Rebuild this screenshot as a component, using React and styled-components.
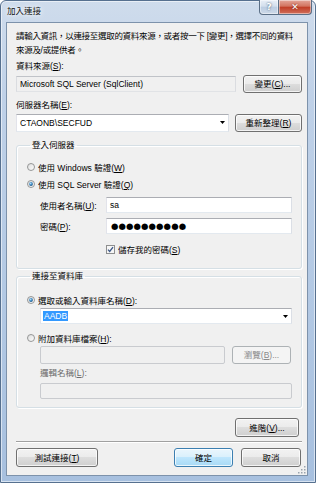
import React from "react";
import styled, { createGlobalStyle } from "styled-components";

const Global = createGlobalStyle`
  html, body { margin: 0; padding: 0; background: #fff; }
  body {
    font-family: "Liberation Sans", "Noto Sans CJK TC", sans-serif;
    font-size: 8.5px;
    color: #000;
  }
`;

const Frame = styled.div`
  width: 316px;
  height: 483px;
  box-sizing: border-box;
  display: flex;
  flex-direction: column;
  border: 1px solid #56708f;
  border-radius: 6px 6px 0 0;
  padding: 0 7px 6px 5px;
  background: linear-gradient(#cfdcec 0%, #bfd1e8 20%, #b3c9e4 60%, #a7c0df 100%);
  box-shadow: inset 0 0 0 1px rgba(255, 255, 255, 0.55);
`;

const TitleBar = styled.div`
  height: 21px;
  display: flex;
  align-items: flex-start;
  margin-right: -4px;
`;

const Title = styled.div`
  line-height: 20px;
  padding-left: 1px;
  text-shadow: 0 0 6px #fff, 0 0 3px #fff;
  color: #111;
`;

const Caption = styled.div`
  margin-left: auto;
  display: flex;
  margin-top: -1px;
`;

const CapButton = styled.div`
  width: ${(p) => p.w}px;
  height: 15px;
  box-sizing: border-box;
  border: 1px solid #5b6f86;
  border-top: none;
  border-radius: ${(p) => (p.close ? "0 0 4px 0" : "0 0 0 4px")};
  border-left: ${(p) => (p.close ? "none" : "1px solid #5b6f86")};
  display: flex;
  align-items: center;
  justify-content: center;
  color: #fff;
  font-family: "DejaVu Sans", sans-serif;
  font-weight: bold;
  font-size: 9px;
  background: ${(p) =>
    p.close
      ? "linear-gradient(#e3a69a 0%, #d2735f 45%, #c03c25 50%, #d0705c 100%)"
      : "linear-gradient(#e9eff7 0%, #d3dfed 45%, #bccde2 50%, #cdd9e8 100%)"};
  box-shadow: inset 0 0 0 1px rgba(255, 255, 255, 0.45);
  text-shadow: 0 0 2px ${(p) => (p.close ? "#6b1a0e" : "#34495e")};
`;

const Client = styled.div`
  position: relative;
  flex: 1;
  box-sizing: border-box;
  background: #f0f0f0;
  border: 1px solid #7d92ab;
  padding: 6px 5px 0 9px;
  display: flex;
  flex-direction: column;
`;

const Intro = styled.div`
  line-height: 14px;
  white-space: nowrap;
  letter-spacing: -0.3px;
`;

const Label = styled.div`
  line-height: 14px;
  margin-top: ${(p) => p.mt || 0}px;
  margin-left: ${(p) => p.ml || 0}px;
  color: ${(p) => (p.disabled ? "#6d6d6d" : "#000")};
  white-space: nowrap;
`;

const Row = styled.div`
  display: flex;
  align-items: center;
  height: ${(p) => p.h || 18}px;
  margin-top: ${(p) => p.mt || 0}px;
  margin-left: ${(p) => p.ml || 0}px;
  gap: ${(p) => p.gap || 0}px;
`;

const TextBox = styled.div`
  box-sizing: border-box;
  height: ${(p) => p.h || 16}px;
  width: ${(p) => (p.w ? `${p.w}px` : "auto")};
  flex: ${(p) => (p.w ? "none" : 1)};
  border: 1px solid;
  border-color: ${(p) =>
    p.disabled ? "#c9cbcf" : p.readonly ? "#c0c3c8 #dadce0 #e1e3e6 #dadce0" : "#abadb3 #dbdfe6 #e3e9ef #e2e3ea"};
  border-radius: ${(p) => (p.disabled ? 2 : 0)}px;
  background: ${(p) => (p.disabled || p.readonly ? "#f0f0f0" : "#fff")};
  padding: 0 3px;
  display: flex;
  align-items: center;
  white-space: nowrap;
  overflow: hidden;
`;

const Value = styled.span`
  flex: 1;
  line-height: 12px;
`;

const Selected = styled.span`
  background: #3399ff;
  color: #fff;
  line-height: 12px;
  padding: 0 1px;
  margin-left: -1px;
`;

const Dots = styled.span`
  font-family: "DejaVu Sans", sans-serif;
  font-size: 8.5px;
  letter-spacing: 0.1px;
  line-height: 12px;
  padding-left: 1px;
`;

const Button = styled.button`
  box-sizing: border-box;
  height: ${(p) => p.h || 19}px;
  width: ${(p) => p.w}px;
  flex: none;
  margin: 0 ${(p) => p.mr || 0}px 0 ${(p) => p.ml || 0}px;
  padding: 0;
  font: inherit;
  line-height: 12px;
  color: ${(p) => (p.disabled ? "#8a8a8a" : "#000")};
  border: 1px solid ${(p) => (p.primary ? "#3c7fb1" : p.disabled ? "#adb2b5" : "#707070")};
  border-radius: 3px;
  background: ${(p) =>
    p.primary
      ? "linear-gradient(#eaf6fd 0%, #d9f0fc 50%, #bee6fd 50%, #a7d9f5 100%)"
      : p.disabled
      ? "#f4f4f4"
      : "linear-gradient(#f2f2f2 0%, #ebebeb 50%, #dddddd 50%, #cfcfcf 100%)"};
  box-shadow: inset 0 0 0 1px ${(p) => (p.disabled ? "#f4f4f4" : "rgba(255,255,255,0.75)")};
`;

const Group = styled.fieldset`
  margin: ${(p) => p.mt || 0}px 0 0;
  padding: 0 9px ${(p) => p.pb}px 10px;
  border: 1px solid #d5dfe5;
  border-radius: 3px;
  box-shadow: inset 1px 1px 0 #fff, 1px 1px 0 #fff;
  min-width: 0;
  display: flex;
  flex-direction: column;
`;

const Legend = styled.legend`
  padding: 0 2px;
  margin-left: 3px;
  line-height: 14px;
`;

const OptionRow = styled.div`
  display: flex;
  align-items: center;
  gap: 3px;
  height: 14px;
  margin-top: ${(p) => p.mt || 0}px;
  margin-left: ${(p) => p.ml || 0}px;
  white-space: nowrap;
`;

const FieldLabel = styled.div`
  width: 79px;
  flex: none;
  padding-left: 13px;
  box-sizing: border-box;
  white-space: nowrap;
`;

const Separator = styled.div`
  margin-top: 4px;
  height: 1px;
  background: #a0a0a0;
  border-bottom: 1px solid #fff;
`;

const Footer = styled.div`
  display: flex;
  align-items: center;
  margin-top: 5px;
`;

const Spacer = styled.div`
  flex: 1;
`;

const Grip = styled.svg`
  position: absolute;
  right: 1px;
  bottom: 1px;
`;

const RadioIcon = ({ checked }) => (
  <svg width="8" height="8" viewBox="0 0 8 8">
    <defs>
      <linearGradient id="rg" x1="0" y1="0" x2="1" y2="1">
        <stop offset="0" stopColor="#dcdcdc" />
        <stop offset="1" stopColor="#ffffff" />
      </linearGradient>
      <radialGradient id="rd" cx="0.4" cy="0.35" r="0.7">
        <stop offset="0" stopColor="#b9e1f7" />
        <stop offset="0.5" stopColor="#3f8cc6" />
        <stop offset="1" stopColor="#1b4e7a" />
      </radialGradient>
    </defs>
    <circle cx="4" cy="4" r="3.5" fill="url(#rg)" stroke="#8b8c8c" strokeWidth="0.9" />
    {checked && <circle cx="4" cy="4" r="1.9" fill="url(#rd)" />}
  </svg>
);

const CheckIcon = () => (
  <svg width="9" height="9" viewBox="0 0 9 9">
    <rect x="0.5" y="0.5" width="8" height="8" fill="#f6f6f6" stroke="#8e8f8f" />
    <path d="M2 4.6 L3.7 6.4 L7 2.2" fill="none" stroke="#3a5686" strokeWidth="1.3" />
  </svg>
);

const Arrow = () => (
  <svg width="5" height="3" viewBox="0 0 5 3">
    <path d="M0 0 H5 L2.5 3 Z" fill="#000" />
  </svg>
);

const App = () => {
  return (
    <>
      <Global />
      <Frame>
        <TitleBar>
          <Title>加入連接</Title>
          <Caption>
            <CapButton w={20}>?</CapButton>
            <CapButton w={33} close>
              ✕
            </CapButton>
          </Caption>
        </TitleBar>
        <Client>
          <Intro>
            請輸入資訊，以連接至選取的資料來源，或者按一下 [變更]，選擇不同的資料
            <br />
            來源及/或提供者。
          </Intro>
          <Label mt={2}>
            資料來源(<u>S</u>):
          </Label>
          <Row mt={2} gap={7}>
            <TextBox w={220} readonly>
              <Value>Microsoft SQL Server (SqlClient)</Value>
            </TextBox>
            <Button w={59} h={18} mr={1}>
              變更(<u>C</u>)...
            </Button>
          </Row>
          <Label mt={5}>
            伺服器名稱(<u>E</u>):
          </Label>
          <Row mt={1} h={19} gap={6}>
            <TextBox w={213} h={18}>
              <Value>CTAONB\SECFUD</Value>
              <Arrow />
            </TextBox>
            <Button w={67} h={18} mr={1}>
              重新整理(<u>R</u>)
            </Button>
          </Row>

          <Group mt={6} pb={12}>
            <Legend>登入伺服器</Legend>
            <OptionRow mt={8}>
              <RadioIcon />
              <span>
                使用 Windows 驗證(<u>W</u>)
              </span>
            </OptionRow>
            <OptionRow mt={3}>
              <RadioIcon checked />
              <span>
                使用 SQL Server 驗證(<u>Q</u>)
              </span>
            </OptionRow>
            <Row mt={6} h={16}>
              <FieldLabel>
                使用者名稱(<u>U</u>):
              </FieldLabel>
              <TextBox>
                <Value>sa</Value>
              </TextBox>
            </Row>
            <Row mt={5} h={16}>
              <FieldLabel>
                密碼(<u>P</u>):
              </FieldLabel>
              <TextBox>
                <Dots>●●●●●●●●●●</Dots>
              </TextBox>
            </Row>
            <OptionRow mt={8} ml={79}>
              <CheckIcon />
              <span>
                儲存我的密碼(<u>S</u>)
              </span>
            </OptionRow>
          </Group>

          <Group pb={8}>
            <Legend>連接至資料庫</Legend>
            <OptionRow mt={10}>
              <RadioIcon checked />
              <span>
                選取或輸入資料庫名稱(<u>D</u>):
              </span>
            </OptionRow>
            <Row mt={1} h={16} ml={13}>
              <TextBox>
                <Value>
                  <Selected>AADB</Selected>
                </Value>
                <Arrow />
              </TextBox>
            </Row>
            <OptionRow mt={7}>
              <RadioIcon />
              <span>
                附加資料庫檔案(<u>H</u>):
              </span>
            </OptionRow>
            <Row mt={1} h={18} ml={13} gap={7}>
              <TextBox h={18} disabled />
              <Button w={59} h={18} mr={1} disabled>
                瀏覽(<u>B</u>)...
              </Button>
            </Row>
            <Label mt={2} ml={13} disabled>
              邏輯名稱(<u>L</u>):
            </Label>
            <Row mt={3} h={16} ml={13}>
              <TextBox disabled />
            </Row>
          </Group>

          <Row mt={10} h={19}>
            <Spacer />
            <Button w={64} mr={3}>
              進階(<u>V</u>)...
            </Button>
          </Row>
          <Separator />
          <Footer>
            <Button w={82}>
              測試連接(<u>T</u>)
            </Button>
            <Spacer />
            <Button w={59} primary>
              確定
            </Button>
            <Button w={60} ml={8} mr={1}>
              取消
            </Button>
          </Footer>
          <Grip width="8" height="8" viewBox="0 0 8 8">
            {[
              [6, 0],
              [6, 3],
              [3, 3],
              [6, 6],
              [3, 6],
              [0, 6],
            ].map(([x, y]) => (
              <rect key={`${x}-${y}`} x={x} y={y} width="1.5" height="1.5" fill="#9aa3ad" />
            ))}
          </Grip>
        </Client>
      </Frame>
    </>
  );
};

export default App;
